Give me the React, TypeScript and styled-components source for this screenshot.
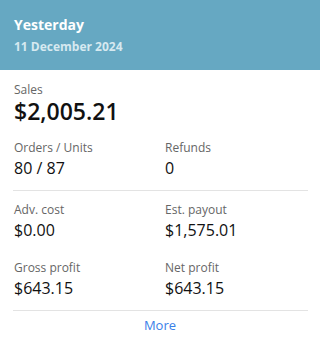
import * as React from "react";
import styled, { createGlobalStyle } from "styled-components";

const GlobalStyle = createGlobalStyle`
  html, body {
    margin: 0;
    padding: 0;
    background: #ffffff;
    font-family: "Open Sans", "Noto Sans", sans-serif;
  }
`;

const Card = styled.div`
  width: 320px;
  height: 340px;
  background: #ffffff;
  display: flex;
  flex-direction: column;
`;

const Header = styled.div`
  height: 70px;
  box-sizing: border-box;
  background: #66a8c2;
  padding: 15px 14px 0 14px;
  display: flex;
  flex-direction: column;
`;

const Title = styled.div`
  color: #ffffff;
  font-size: 14px;
  font-weight: 700;
  line-height: 20px;
`;

const Subtitle = styled.div`
  color: #d6e9f0;
  font-size: 12px;
  font-weight: 700;
  line-height: 16px;
  margin-top: 4px;
`;

const Body = styled.div`
  padding: 12px 12px 0 13px;
  display: flex;
  flex-direction: column;
`;

const Label = styled.div`
  color: #666666;
  font-size: 12px;
  line-height: 16px;
  padding-left: 1px;
`;

const SalesLabel = styled(Label)`
  line-height: 15px;
`;

const BigValue = styled.div`
  color: #111111;
  font-size: 23px;
  font-weight: 600;
  line-height: 24px;
  margin-top: 2px;
  padding-left: 1px;
`;

const Value = styled.div`
  color: #111111;
  font-size: 16px;
  line-height: 20px;
  margin-top: 2px;
  padding-left: 1px;
`;

const Row = styled.div<{ $top: number }>`
  display: grid;
  grid-template-columns: 151px 1fr;
  margin-top: ${(p) => p.$top}px;
`;

const Divider = styled.div<{ $top: number; $bottom: number }>`
  height: 1px;
  background: #e3e3e3;
  margin-top: ${(p) => p.$top}px;
  margin-bottom: ${(p) => p.$bottom}px;
`;

const More = styled.a`
  display: block;
  text-align: center;
  color: #3a80e8;
  font-size: 13px;
  line-height: 18px;
  text-decoration: none;
  cursor: pointer;
  margin-right: 1px;
`;

const Stat = ({ label, value }: { label: string; value: string }) => (
  <div>
    <Label>{label}</Label>
    <Value>{value}</Value>
  </div>
);

export default function App() {
  return (
    <Card>
      <GlobalStyle />
      <Header>
        <Title>Yesterday</Title>
        <Subtitle>11 December 2024</Subtitle>
      </Header>
      <Body>
        <SalesLabel>Sales</SalesLabel>
        <BigValue>$2,005.21</BigValue>
        <Row $top={17}>
          <Stat label="Orders / Units" value="80 / 87" />
          <Stat label="Refunds" value="0" />
        </Row>
        <Divider $top={12} $bottom={11} />
        <Row $top={0}>
          <Stat label="Adv. cost" value="$0.00" />
          <Stat label="Est. payout" value="$1,575.01" />
        </Row>
        <Row $top={20}>
          <Stat label="Gross profit" value="$643.15" />
          <Stat label="Net profit" value="$643.15" />
        </Row>
        <Divider $top={12} $bottom={5} />
        <More>More</More>
      </Body>
    </Card>
  );
}
